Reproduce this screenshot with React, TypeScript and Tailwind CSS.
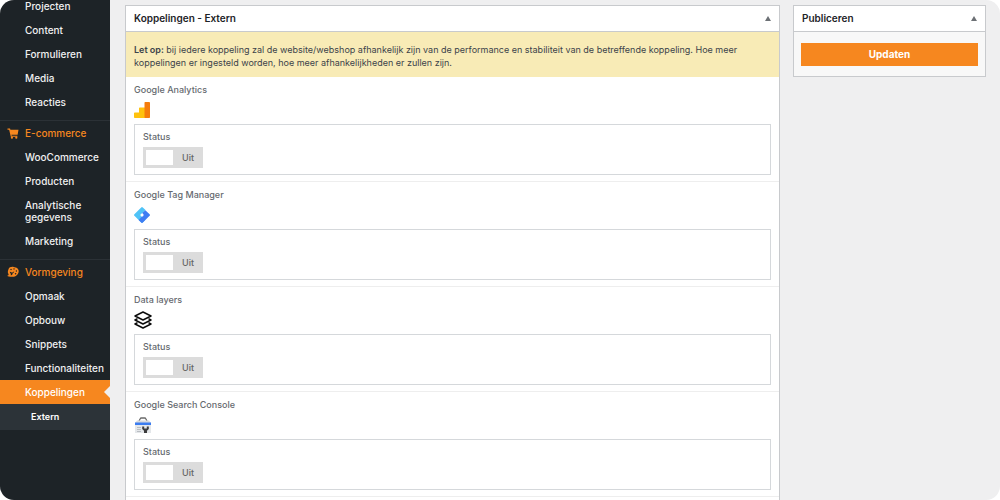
import { useState, type ReactNode } from "react";

function CartIcon() {
  return (
    <svg viewBox="0 0 20 20" className="h-[11px] w-3" fill="currentColor" aria-hidden="true">
      <path d="M0 1h4.600l.7 2H20l-1.600 9.400H7.200l.4 1.600H18v2H6L3 3H0z" />
      <circle cx="8" cy="17.500" r="2" />
      <circle cx="16" cy="17.500" r="2" />
    </svg>
  );
}

function PaletteIcon() {
  return (
    <svg viewBox="0 0 20 20" className="size-3" fill="currentColor" aria-hidden="true">
      <path
        fillRule="evenodd"
        d="M2.500 5.500C3.500 2.200 7 1 11 1.500c5 .3 8.800 3 8.500 7.500-.4 5-5 9-10 9-4 0-7.500.2-9.300-1.700 2-.3 2.900-1.400 2.300-3C.8 11.500 1.400 8 2.500 5.500Zm3 .3a1.200 1.200 0 1 0 2.400 0a1.200 1.200 0 1 0-2.400 0Zm5-1a1.200 1.200 0 1 0 2.400 0a1.200 1.200 0 1 0-2.400 0Zm4 3.400a1.200 1.200 0 1 0 2.400 0a1.200 1.200 0 1 0-2.400 0Zm-1.500 4.600a1.300 1.300 0 1 0 2.600 0a1.300 1.300 0 1 0-2.600 0ZM4.500 9.500c1.700.2 3 .8 3.800 1.800l3.200-2.200.6.800-2.900 2.500c.2 1.600-1 3-3.200 3 .8-1.200.5-2.300-.2-3.200-.5-.7-1-1.500-1.300-2.700Z"
      />
    </svg>
  );
}

function AnalyticsIcon() {
  return (
    <svg viewBox="0 0 16 16" className="size-4" aria-hidden="true">
      <path d="M.8 10.500H5V6.300q0-.8.800-.8H11V16H.8Q0 16 0 15.200v-3.900q0-.8.800-.8Z" fill="#ffc20e" />
      <rect x="10.500" width="5.500" height="16" rx=".8" fill="#f57c0c" />
    </svg>
  );
}

function TagManagerIcon() {
  return (
    <svg viewBox="0 0 16 16" className="size-4" aria-hidden="true">
      <path d="M7.200.4q.8-.8 1.600 0L11.500 3.100 6.500 8l5 4.800L8.800 15.600q-.8.800-1.600 0L.4 8.800q-.8-.8 0-1.600Z" fill="#4fc3f7" />
      <path d="m11.300 3.300 4.300 3.900q.8.800 0 1.600l-6.800 6.800q-.8.800-1.600 0L4.600 13 9.500 8 8.200 5.900Z" fill="#3f7df3" />
      <circle cx="8" cy="8" r="1.500" fill="#fff" />
    </svg>
  );
}

function LayersIcon() {
  return (
    <svg viewBox="0 0 18 18" className="size-[18px]" fill="none" stroke="#0c0c0c" strokeWidth="1.500" strokeLinejoin="round" aria-hidden="true">
      <path d="M9 1 17 5 9 9 1 5Z" />
      <path d="M3.500 7.600 1 9l8 4 8-4-2.500-1.400" />
      <path d="M3.500 11.600 1 13l8 4 8-4-2.500-1.400" />
    </svg>
  );
}

function SearchConsoleIcon() {
  return (
    <svg viewBox="0 0 18 16" className="h-4 w-[18px]" aria-hidden="true">
      <path d="M5 4 6.200 1.700Q6.500 1 7.300 1h3.400q.8 0 1.100.7L13 4" fill="none" stroke="#6a6a6a" strokeWidth="1.300" />
      <path d="M1 6 3 3.500h12L17 6v10H1Z" fill="#d8dade" />
      <path d="M1 5.400h16V8H1z" fill="#3b7cf0" />
      <path d="M1 8h16v8H1z" fill="#e4e7ea" />
      <path d="M3 10h4v1H3zM3 12h4v1H3zM3 14h4v1H3z" fill="#b9bdc2" />
      <path d="M8.200 9.500h2v2h2.600v-2h2V12l-1.800 1.700V16h-3v-2.300L8.200 12Z" fill="#3c3c3c" />
    </svg>
  );
}

type MenuGroup = {
  title?: string;
  icon?: ReactNode;
  items: string[];
};

const menu: MenuGroup[] = [
  { items: ["Projecten", "Content", "Formulieren", "Media", "Reacties"] },
  {
    title: "E-commerce",
    icon: <CartIcon />,
    items: ["WooCommerce", "Producten", "Analytische gegevens", "Marketing"],
  },
  {
    title: "Vormgeving",
    icon: <PaletteIcon />,
    items: ["Opmaak", "Opbouw", "Snippets", "Functionaliteiten", "Koppelingen"],
  },
];

function Sidebar() {
  return (
    <nav aria-label="Hoofdmenu" className="flex w-[110px] shrink-0 flex-col gap-1.5 bg-[#1d2327] text-[10px] leading-3 font-medium text-[#f0f0f1]">
      {menu.map((group, index) => (
        <div key={index} className={group.title ? "border-t border-[#2b3136]" : "-mt-1.5"}>
          {group.title && (
            <a href="#" className="flex items-center gap-1.5 py-1.5 pl-[7px] text-[#f6871f]">
              {group.icon}
              <span>{group.title}</span>
            </a>
          )}
          <ul>
            {group.items.map((item) =>
              item === "Koppelingen" ? (
                <li key={item}>
                  <a href="#" aria-current="page" className="flex items-center justify-between bg-[#f6871f] pl-[25px] text-white">
                    <span className="py-1.5">{item}</span>
                    <svg viewBox="0 0 6 12" className="h-3 w-1.5" aria-hidden="true">
                      <path d="M6 0v12L0 6Z" fill="#efeff0" />
                    </svg>
                  </a>
                  <ul className="bg-[#2c3338] py-[7px]">
                    <li>
                      <a href="#" className="block pl-[31px] text-[9px] font-semibold text-white">
                        Extern
                      </a>
                    </li>
                  </ul>
                </li>
              ) : (
                <li key={item}>
                  <a href="#" className="block py-1.5 pr-1 pl-[25px]">
                    {item}
                  </a>
                </li>
              ),
            )}
          </ul>
        </div>
      ))}
    </nav>
  );
}

function Panel({ title, children }: { title: string; children: ReactNode }) {
  const [open, setOpen] = useState(true);
  return (
    <section className="border border-[#c8cacd] bg-white">
      <header className="flex h-[26px] items-center justify-between border-b border-[#c8cacd] px-2">
        <h2 className="text-[10px] font-semibold text-[#1d2327]">{title}</h2>
        <button type="button" aria-expanded={open} aria-label={`${title} in- of uitklappen`} onClick={() => setOpen(!open)}>
          <svg viewBox="0 0 6 5" className="h-[5px] w-1.5" aria-hidden="true">
            <path d="M3 0 6 5H0Z" fill="#6c7075" />
          </svg>
        </button>
      </header>
      {open && children}
    </section>
  );
}

const integrations = [
  { id: "analytics", name: "Google Analytics", icon: <AnalyticsIcon /> },
  { id: "tag-manager", name: "Google Tag Manager", icon: <TagManagerIcon /> },
  { id: "data-layers", name: "Data layers", icon: <LayersIcon /> },
  { id: "search-console", name: "Google Search Console", icon: <SearchConsoleIcon /> },
];

function StatusSwitch({ id }: { id: string }) {
  const [on, setOn] = useState(false);
  return (
    <div className="flex flex-col items-start gap-1">
      <label htmlFor={id} className="leading-3">
        Status
      </label>
      <label
        className={
          on
            ? "relative flex h-[21px] w-[60px] flex-row-reverse items-center bg-[#f6871f] py-[3px] pr-[3px] text-white"
            : "relative flex h-[21px] w-[60px] items-center bg-[#dcdcdc] py-[3px] pl-[3px] text-[#666]"
        }
      >
        <input id={id} type="checkbox" checked={on} onChange={() => setOn(!on)} className="absolute inset-0 size-full cursor-pointer opacity-0" />
        <span className="h-full w-[27px] bg-white" />
        <span className="flex-1 text-center text-[9px]">{on ? "Aan" : "Uit"}</span>
      </label>
    </div>
  );
}

export default function App() {
  return (
    <div className="h-screen bg-white font-['Inter',sans-serif]">
      <div className="flex h-full overflow-hidden rounded-[14px] bg-[#efeff0]">
        <Sidebar />
        <main className="flex min-w-0 flex-1 items-start gap-[13px] pt-[5px] pr-3.5 pl-[15px]">
          <div className="min-w-0 flex-1">
            <Panel title="Koppelingen - Extern">
              <p className="bg-[#f8ebb6] px-2 pt-[11px] pb-2 text-[9px] leading-[13px] text-[#3c434a]">
                <strong className="font-semibold">Let op:</strong> bij iedere koppeling zal de website/webshop afhankelijk zijn van de performance en
                stabiliteit van de betreffende koppeling. Hoe meer koppelingen er ingesteld worden, hoe meer afhankelijkheden er zullen zijn.
              </p>
              <div className="pb-2">
                {integrations.map(({ id, name, icon }) => (
                  <div key={id} className="border-b border-[#eeeeee] px-2 pt-[7px] pb-1.5 text-[9px] font-medium text-[#666a6f]">
                    <h3 className="leading-3">{name}</h3>
                    <div className="flex h-7 items-center">{icon}</div>
                    <div className="border border-[#d5d8db] px-2 py-1.5">
                      <StatusSwitch id={`status-${id}`} />
                    </div>
                  </div>
                ))}
              </div>
            </Panel>
          </div>
          <aside className="w-[193px] shrink-0">
            <Panel title="Publiceren">
              <div className="bg-[#f8f8f8] px-[7px] pt-[11px] pb-2.5">
                <button type="button" className="block h-[23px] w-full bg-[#f6871f] text-[10px] font-bold text-white">
                  Updaten
                </button>
              </div>
            </Panel>
          </aside>
        </main>
      </div>
    </div>
  );
}
